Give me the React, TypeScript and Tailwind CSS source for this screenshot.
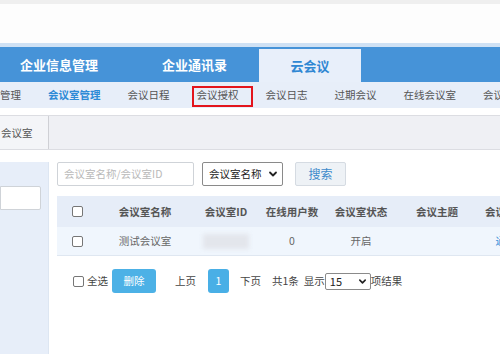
import React from "react";

const font = { fontFamily: '"Noto Sans CJK SC", "Noto Sans", sans-serif' };

function Chevron({ className }: { className?: string }) {
  return (
    <svg viewBox="0 0 10 10" className={className} fill="none" stroke="#222" strokeWidth="1.8" strokeLinecap="round" strokeLinejoin="round">
      <path d="M2 3.5 L5 6.5 L8 3.5" />
    </svg>
  );
}

function Box() {
  return <div className="w-[11px] h-[11px] border border-[#767676] rounded-[2px] bg-white shrink-0" />;
}

export default function App() {
  const cols = [
    "w-[41px] shrink-0",
    "w-[94px] shrink-0",
    "w-[68px] shrink-0",
    "w-[64px] shrink-0",
    "w-[74px] shrink-0",
    "w-[78px] shrink-0",
    "w-[60px] shrink-0",
  ];
  return (
    <div className="w-[500px] h-[354px] overflow-hidden bg-white relative" style={font}>
      <div className="h-[4px] bg-[#efefef]" />
      <div className="h-[39px] bg-[#fdfdfd]" />
      <div className="h-[4px] bg-[#cfe1f4]" />
      {/* main nav */}
      <div className="h-[35px] bg-[#4693d8] flex items-end">
        <div className="flex items-end ml-[-12px] h-full">
          <div className="h-full flex items-center px-[32px] text-white font-bold text-[13px] whitespace-nowrap">企业信息管理</div>
          <div className="h-full flex items-center px-[32px] text-white font-bold text-[13px] whitespace-nowrap">企业通讯录</div>
          <div className="h-[33px] w-[102px] flex items-center justify-center bg-[#e8effa] text-[#2f87d3] font-bold text-[13px] whitespace-nowrap">云会议</div>
        </div>
      </div>
      {/* sub nav */}
      <div className="h-[26px] bg-[#e7eef9] flex items-stretch gap-[27px] text-[10.5px] text-[#555] whitespace-nowrap overflow-hidden">
        <span className="flex items-center">管理</span>
        <span className="flex items-center text-[#2d8ad6] font-bold">会议室管理</span>
        <span className="flex items-center">会议日程</span>
        <span className="flex items-center relative">
          会议授权
          <span className="absolute top-[4px] bottom-[1px] left-[-5px] right-[-14px] border-2 border-[#e3141c]" />
        </span>
        <span className="flex items-center">会议日志</span>
        <span className="flex items-center">过期会议</span>
        <span className="flex items-center">在线会议室</span>
        <span className="flex items-center">会议室</span>
      </div>
      <div className="h-[7px] bg-white" />
      {/* tab strip */}
      <div className="h-[35px] bg-[#eff0f4] border-t border-b border-[#dcdde2] flex">
        <div className="w-[49px] h-full bg-[#f4f5f8] border-r border-[#cfd0d5] flex items-center pl-[1px] text-[10.5px] text-[#555] whitespace-nowrap">会议室</div>
      </div>
      <div className="h-[12px] bg-white" />
      {/* content */}
      <div className="flex">
        <div className="w-[49px] h-[192px] bg-[#e7eef9] border-r border-[#dde6f2] shrink-0">
          <div className="mt-[24px] h-[24px] w-[41px] bg-white border border-[#cfd3d8] rounded-r-[2px]" />
        </div>
        <div className="pl-[8px] flex-1 min-w-0">
          <div className="flex items-center h-[24px]">
            <div className="w-[137px] h-[24px] border border-[#cfd3d8] rounded-[2px] flex items-center pl-[6px] text-[10.5px] text-[#b9b9b9] whitespace-nowrap">会议室名称/会议室ID</div>
            <div className="ml-[8px] w-[81px] h-[24px] border border-[#8a8a8a] rounded-[2px] flex items-center pl-[6px] pr-[4px] text-[10.5px] text-[#222] whitespace-nowrap justify-between">
              <span>会议室名称</span>
              <Chevron className="w-[10px] h-[10px]" />
            </div>
            <div className="ml-[12px] w-[51px] h-[24px] border border-[#d5dbe2] bg-[#eef2f6] rounded-[2px] flex items-center justify-center text-[12px] text-[#3d8acb]">搜索</div>
          </div>
          {/* table */}
          <div className="mt-[10px] w-[480px]">
            <div className="h-[31px] bg-[#e6edf8] flex items-center text-[10.5px] font-bold text-[#555] whitespace-nowrap">
              <div className={`${cols[0]} flex justify-center`}><Box /></div>
              <div className={`${cols[1]} text-center`}>会议室名称</div>
              <div className={`${cols[2]} text-center`}>会议室ID</div>
              <div className={`${cols[3]} text-center`}>在线用户数</div>
              <div className={`${cols[4]} text-center`}>会议室状态</div>
              <div className={`${cols[5]} text-center`}>会议主题</div>
              <div className={`${cols[6]} text-center`}>会议操作</div>
            </div>
            <div className="h-[29px] bg-[#f0f6fd] border-b border-[#dfe7f1] flex items-center text-[10.5px] text-[#666] whitespace-nowrap">
              <div className={`${cols[0]} flex justify-center`}><Box /></div>
              <div className={`${cols[1]} text-center`}>测试会议室</div>
              <div className={`${cols[2]} flex justify-center`}>
                <div className="w-[46px] h-[15px] bg-[#e3e6ec] blur-[2px]" />
              </div>
              <div className={`${cols[3]} text-center`}>0</div>
              <div className={`${cols[4]} text-center`}>开启</div>
              <div className={`${cols[5]} text-center`}></div>
              <div className={`${cols[6]} text-center text-[#2d8ad6]`}>通过</div>
            </div>
          </div>
          {/* footer */}
          <div className="mt-[13px] h-[24px] flex items-center text-[10.5px] text-[#444] whitespace-nowrap">
            <div className="ml-[16px]"><Box /></div>
            <span className="ml-[3px]">全选</span>
            <div className="ml-[4px] w-[44px] h-[24px] bg-[#4cb1e6] rounded-[3px] flex items-center justify-center text-white">删除</div>
            <span className="ml-[19px]">上页</span>
            <div className="ml-[12px] w-[21px] h-[24px] bg-[#49afe6] rounded-[3px] flex items-center justify-center text-white">1</div>
            <span className="ml-[11px]">下页</span>
            <span className="ml-[11px]">共1条</span>
            <span className="ml-[5px]">显示</span>
            <div className="w-[46px] h-[17px] border border-[#8a8a8a] rounded-[2px] flex items-center justify-between pl-[4px] pr-[3px] text-[11px] text-[#222]">
              <span>15</span>
              <Chevron className="w-[9px] h-[9px]" />
            </div>
            <span>项结果</span>
          </div>
        </div>
      </div>
    </div>
  );
}
